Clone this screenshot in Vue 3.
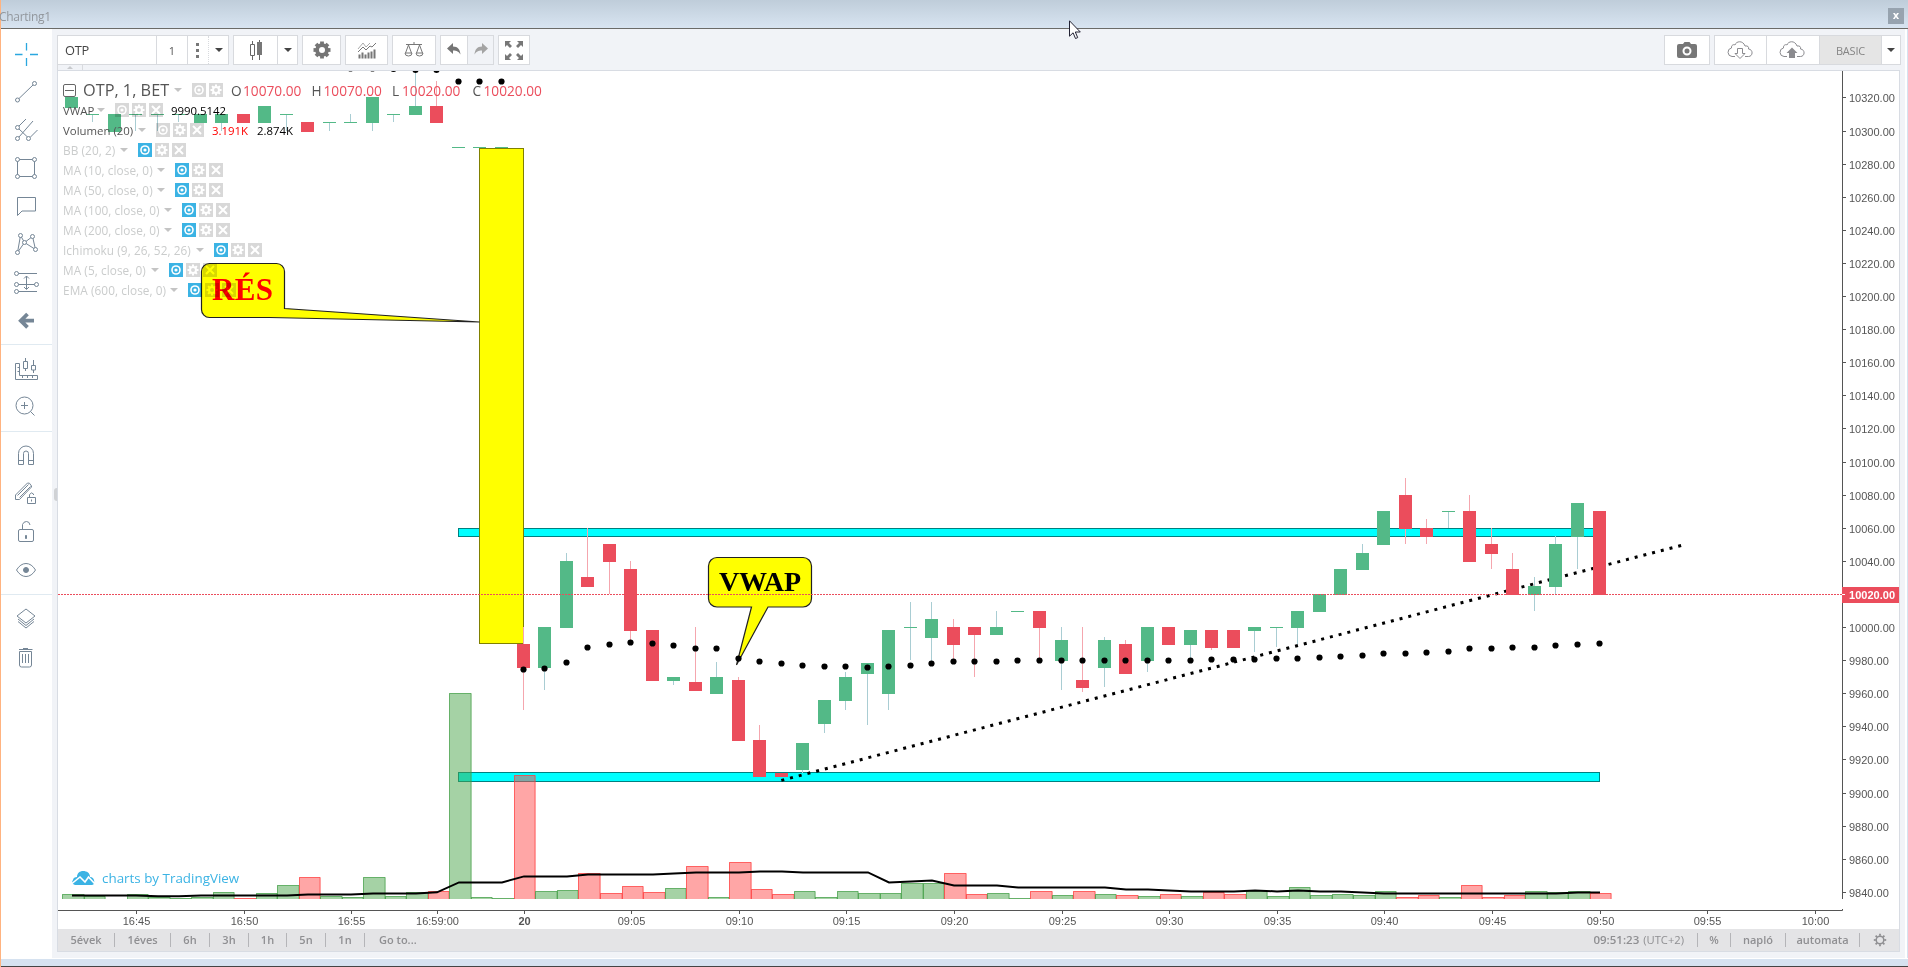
<template>
  <div class="window">
    <header class="titlebar">
      <span class="caption">Charting1</span>
      <button class="close">x</button>
    </header>

    <div class="body">
      <aside class="tools">
        <div v-for="(group, g) in toolGroups" :key="g" class="tool-group">
          <button v-for="tool in group" :key="tool.name" class="tool" :class="{ active: tool.active }">
            <svg width="38" height="38" viewBox="0 0 38 38">
              <path v-if="tool.d" :d="tool.d" />
              <path v-if="tool.bold" class="bold" :d="tool.bold" />
              <path v-if="tool.fill" class="fill" :d="tool.fill" />
              <circle v-for="(c, i) in tool.dots || []" :key="i" class="knot" :cx="c[0]" :cy="c[1]" r="2" />
            </svg>
          </button>
        </div>
      </aside>

      <div class="gutter"><i class="handle"></i></div>

      <main class="main">
        <div class="toolbar">
          <div class="group">
            <span class="symbol">OTP</span>
            <span class="interval">1</span>
            <span class="more"><svg width="20" height="28"><path d="M8 7h3v3H8zM8 13h3v3H8zM8 19h3v3H8z" fill="#777" /></svg></span>
            <span class="drop w20"><i class="caret"></i></span>
          </div>
          <div class="group">
            <span class="w43">
              <svg width="42" height="28" viewBox="0 0 42 28">
                <path d="M17.500 5v3M17.500 20v4M15.500 8.500h4v11h-4z" fill="none" stroke="#666" />
                <path d="M24.500 4v20" stroke="#666" /><path d="M22 6h5v13h-5z" fill="#777" />
              </svg>
            </span>
            <span class="drop w20"><i class="caret"></i></span>
          </div>
          <div class="group">
            <span class="w37">
              <svg width="18" height="18" viewBox="-9 -9 18 18">
                <circle r="4.900" fill="none" stroke="#757575" stroke-width="3.800" />
                <path v-for="a in 8" :key="a" d="M-1.900 -8.500h3.800v3h-3.800z" fill="#757575" :transform="`rotate(${a * 45})`" />
              </svg>
            </span>
          </div>
          <div class="group">
            <span class="w41">
              <svg width="20" height="18" viewBox="0 0 20 18">
                <path d="M2.500 17.500v-4M5.500 17.500v-6M8.500 17.500v-4M11.500 17.500v-6M14.500 17.500v-7M17.500 17.500v-9" stroke="#777" stroke-width="2" />
                <path d="M1 11l5-5 3 3 4-4 2 1 4-4" fill="none" stroke="#777" /><path d="M1 8l5-6 3 4 4-4" fill="none" stroke="#aaa" />
              </svg>
            </span>
          </div>
          <div class="group">
            <span class="w42">
              <svg width="20" height="18" viewBox="0 0 20 18" fill="none" stroke="#777">
                <path d="M2 3.500h16M10 1v3M4.500 4L1.500 12M4.500 4l3 8M15.500 4l-3 8M15.500 4l3 8" />
                <path d="M1 12a3.500 3 0 0 0 7 0zM12 12a3.500 3 0 0 0 7 0z" />
              </svg>
            </span>
          </div>
          <div class="group">
            <span class="w26"><svg width="16" height="14" viewBox="0 0 16 14"><path d="M1 5.500L7 0v3.500c5 0 7 3 7.500 8C12.500 8.500 11 7.500 7 7.500V11z" fill="#757575" /></svg></span>
            <span class="w26 muted"><svg width="16" height="14" viewBox="0 0 16 14"><path d="M15 5.500L9 0v3.500c-5 0-7 3-7.500 8C3.500 8.500 5 7.500 9 7.500V11z" fill="#a4a4a4" /></svg></span>
          </div>
          <div class="group last">
            <span class="w30">
              <svg width="18" height="19" viewBox="0 0 18 19">
                <path d="M0 0h6L4 2l3 3-2 2-3-3-2 2zM18 0h-6l2 2-3 3 2 2 3-3 2 2zM0 19h6l-2-2 3-3-2-2-3 3-2-2zM18 19h-6l2-2-3-3 2-2 3 3 2-2z" fill="#777" />
              </svg>
            </span>
          </div>

          <div class="group camera">
            <span class="w44">
              <svg width="20" height="16" viewBox="0 0 20 16">
                <path d="M2 2h4l1.500-2h5L14 2h4a2 2 0 0 1 2 2v10a2 2 0 0 1-2 2H2a2 2 0 0 1-2-2V4a2 2 0 0 1 2-2z" fill="#777" />
                <circle cx="10" cy="9" r="3.500" fill="#777" stroke="#fff" stroke-width="2" />
              </svg>
            </span>
          </div>
          <div class="group account">
            <span class="w51">
              <svg width="26" height="18" viewBox="0 0 26 18">
                <path d="M8 15.500H5a4.300 4.300 0 0 1-.5-8.500C4 4 7 3 8 4c1-4 8-5 10 1 3-.5 4 1 3.500 3 5 .5 4.500 7.500 0 7.500H18" fill="none" stroke="#8b8b8f" />
                <path d="M10.500 7.500h5v5h2.500l-5 5-5-5h2.500z" fill="#fff" stroke="#8b8b8f" />
              </svg>
            </span>
            <span class="w53">
              <svg width="26" height="18" viewBox="0 0 26 18">
                <path d="M8 15.500H5a4.300 4.300 0 0 1-.5-8.500C4 4 7 3 8 4c1-4 8-5 10 1 3-.5 4 1 3.500 3 5 .5 4.500 7.500 0 7.500H18" fill="none" stroke="#8b8b8f" />
                <path d="M10 17v-5H7.500L13 6.500l5.500 5.500H16v5z" fill="#8b8b8f" />
              </svg>
            </span>
            <span class="basic">BASIC</span>
            <span class="drop w19"><i class="caret"></i></span>
          </div>
        </div>
        <div class="tab"><i></i></div>

        <section class="pane">
          <svg class="chart" width="1841" height="858" viewBox="58 71 1841 858">
            <!-- price zones -->
            <g class="zone">
              <rect x="458.500" y="528.500" width="1141" height="8" />
              <rect x="458.500" y="772.500" width="1141" height="9" />
            </g>
            <rect class="gap" x="479.500" y="148.500" width="44" height="495" />
            <path class="note" d="M209.500 263.500h67a8 8 0 0 1 8 8v37l195 13.500-210-4.500h-60a8 8 0 0 1-8-8v-38a8 8 0 0 1 8-8z" />
            <text class="note-text res" x="212" y="300" textLength="61">RÉS</text>
            <path class="note" d="M717 557.500h86a8.500 8.500 0 0 1 8.500 8.500v32.500a8.500 8.500 0 0 1-8.500 8.500h-35l-31.500 58L751.500 607H717a8.500 8.500 0 0 1-8.500-8.500V566a8.500 8.500 0 0 1 8.500-8.500z" />
            <text class="note-text" x="719" y="591" textLength="82">VWAP</text>
            <path class="trend" d="M781.300 780.400L1682 545.200" />

            <!-- volume -->
            <g v-for="b in volumes" :key="'v' + b.i" :class="b.up ? 'vol-up' : 'vol-down'">
              <rect :x="b.x" :y="b.y" :width="b.w" :height="899 - b.y" />
              <path :d="`M${b.x + 0.5} 899V${b.y + 0.5}H${b.x + b.w - 0.5}V899`" />
            </g>
            <polyline class="vol-ma" :points="volumeMa" />

            <!-- candles -->
            <g v-for="c in candles" :key="'c' + c.i" :class="c.up ? 'up' : 'down'">
              <rect class="wick" :x="c.x" :y="c.high" width="1" :height="c.low - c.high" />
              <rect class="bar" :x="c.x - 6" :y="c.top" width="13" :height="c.height" />
            </g>
            <circle v-for="d in vwapDots" :key="'d' + d.x" :cx="d.x" :cy="d.y" r="3.100" />
            <path class="last-price" d="M58 594.500H1842" />

            <!-- axes -->
            <path class="axis" d="M1842.500 71V899M58 910.500H1842.500V909" />
            <g v-for="p in priceTicks" :key="p.label">
              <path class="axis" :d="`M1843 ${p.y}h3`" />
              <text class="tick" x="1849" :y="p.y + 4">{{ p.label }}</text>
            </g>
            <rect x="1842" y="587" width="57" height="16" fill="#eb4d5c" />
            <path d="M1842 594.500h3" stroke="#fff" />
            <text class="tick current" x="1849" y="599" textLength="46">10020.00</text>
            <g v-for="t in timeTicks" :key="t.label">
              <path class="axis" :d="`M${t.x} 911v3`" />
              <text class="tick" :class="{ day: t.label === '20' }" :x="t.x" y="925" text-anchor="middle">{{ t.label }}</text>
            </g>
          </svg>

          <div class="brand">
            <svg width="23" height="15" viewBox="0 0 23 15">
              <path d="M3 14a3 3 0 0 1-2-5C1 7 3 6 5 6c0-4 3-6 6-6 4 0 7 2 7 6 3 0 5 3 4 6 0 1-1 2-2 2z" fill="#3bb3e4" />
              <path d="M0 12.500l8-6.500 5 5 3.500-5 6.500 7" fill="none" stroke="#fff" stroke-width="1.600" />
            </svg>
            <span>charts by TradingView</span>
          </div>

          <div class="legend">
            <div class="row title">
              <i class="minus"></i>
              <div class="head">OTP, 1, BET<i class="arrow"></i></div>
              <LegendButton kind="eye" /><LegendButton kind="gear" />
              <span v-for="o in ohlc" :key="o.k" class="ohlc"><b :style="{ width: o.w + 'px' }">{{ o.k }}</b><em>{{ o.v }}</em></span>
            </div>
            <div v-for="s in studies" :key="s.name" class="row" :class="{ off: s.off }">
              <div class="head" :style="{ width: s.w + 'px' }"><span>{{ s.name }}</span><i class="arrow"></i></div>
              <LegendButton kind="eye" :on="s.off" /><LegendButton kind="gear" /><LegendButton kind="cross" />
              <span v-for="v in s.values || []" :key="v.t" class="value" :class="v.c">{{ v.t }}</span>
            </div>
          </div>
        </section>

        <footer class="footer">
          <span v-for="r in ranges" :key="r.t" class="range" :style="{ width: r.w + 'px' }">{{ r.t }}</span>
          <span class="goto">Go to...</span>
          <span class="clock">09:51:23 <small>(UTC+2)</small></span>
          <span class="opt w33">%</span>
          <span class="opt w55">napló</span>
          <span class="opt w74">automata</span>
          <span class="opt w40">
            <svg width="14" height="14" viewBox="-7 -7 14 14">
              <circle r="3.800" fill="none" stroke="#8f8f92" stroke-width="1.500" />
              <path v-for="a in 8" :key="a" d="M0 -6.200v2" stroke="#8f8f92" stroke-width="1.800" :transform="`rotate(${a * 45})`" />
            </svg>
          </span>
        </footer>
      </main>
      <div class="edge"></div>
    </div>
    <div class="status"></div>

    <svg class="cursor" width="13" height="20" viewBox="0 0 13 20">
      <path d="M.5.8v15.400l3.600-3.400 2.400 5.700 2.200-.9-2.400-5.600h5z" fill="#fff" stroke="#223" />
    </svg>
  </div>
</template>

<script setup>
import { h } from 'vue'

const X0 = 523.02
const STEP = 21.52
const barX = i => Math.floor(X0 + i * STEP)
const priceY = p => Math.floor(627.55 - (p - 10000) * 1.655)

// small square buttons next to each study name
const LegendButton = (props) => {
  const bg = props.on ? '#3bb3e4' : '#d8d8d8'
  const parts = {
    eye: [
      h('circle', { cx: 7, cy: 7, r: 4.8, fill: '#fff' }),
      h('circle', { cx: 7, cy: 7, r: 2.4, fill: '#fff', stroke: bg, 'stroke-width': 1.6 }),
    ],
    gear: [
      h('circle', { cx: 7, cy: 7, r: 3, fill: 'none', stroke: '#fff', 'stroke-width': 2 }),
      h('path', { d: 'M7 1.500v2M7 10.500v2M1.500 7h2M10.500 7h2M3.100 3.100l1.400 1.400M9.500 9.500l1.400 1.400M3.100 10.900l1.400-1.400M9.500 4.500l1.400-1.400', stroke: '#fff', 'stroke-width': 2 }),
    ],
    cross: [h('path', { d: 'M3 3l8 8M11 3l-8 8', stroke: '#fff', 'stroke-width': 2 })],
  }
  return h('svg', { class: 'legend-btn', width: 14, height: 14, viewBox: '0 0 14 14' }, [
    h('path', { d: 'M0 0h14v14H0z', fill: bg }),
    ...parts[props.kind],
  ])
}
LegendButton.props = { kind: String, on: Boolean }

// [open, high, low, close], first bar sits 21 bars before 09:00
const FIRST = -21
const raw = [
  [10314, 10320, 10314, 10320], [10310, 10310, 10305, 10310], [10300, 10310, 10300, 10310],
  [10310, 10310, 10300, 10310], [10310, 10310, 10300, 10310], [10310, 10310, 10305, 10310],
  [10305, 10310, 10305, 10310], [10305, 10310, 10300, 10310], [10310, 10310, 10305, 10305],
  [10305, 10315, 10305, 10315], [10310, 10310, 10300, 10310], [10305, 10305, 10300, 10300],
  [10305, 10305, 10300, 10305], [10305, 10310, 10305, 10305], [10305, 10320, 10300, 10320],
  [10310, 10310, 10305, 10310], [10310, 10335, 10310, 10315], [10315, 10330, 10305, 10305],
  [10290, 10290, 10290, 10290], [10290, 10290, 10290, 10290], [10290, 10290, 10290, 10290],
  [9990, 10000, 9950, 9976], [9976, 10000, 9962, 10000], [10000, 10045, 10000, 10040],
  [10030, 10060, 10025, 10025], [10050, 10050, 10020, 10040], [10035, 10040, 9992, 9998],
  [9998, 9998, 9968, 9968], [9968, 9970, 9965, 9970], [9967, 10000, 9962, 9962],
  [9960, 9979, 9960, 9970], [9968, 9970, 9932, 9932], [9932, 9941, 9910, 9910],
  [9912, 9912, 9910, 9910], [9914.5, 9930, 9912, 9930], [9942, 9956, 9936, 9956],
  [9956, 9973, 9950, 9970], [9972, 9978.5, 9941, 9978.5], [9960, 9998, 9950, 9998],
  [10000, 10015, 9980, 10000], [9994, 10015, 9979, 10005], [10000, 10005, 9980, 9990],
  [10000, 10000, 9970, 9996], [9996, 10010, 9996, 10000], [10010, 10010, 10010, 10010],
  [10010, 10010, 9980, 10000], [9980, 10000, 9962, 9992], [9968, 10000, 9960.5, 9964],
  [9976, 9994, 9964, 9992], [9990, 9992, 9972, 9972], [9980, 10000, 9973, 10000],
  [10000, 10000, 9990, 9990], [9990, 9998, 9980, 9998], [9998, 9998, 9986, 9988],
  [9998, 9998, 9988, 9988], [9998, 10000, 9985, 10000], [10000, 10000, 9988, 10000],
  [10000, 10010, 9990, 10010], [10010, 10020, 10010, 10020], [10020, 10035, 10020, 10035],
  [10035, 10050, 10035, 10045], [10050, 10070, 10050, 10070], [10080, 10090, 10050, 10060],
  [10060, 10065, 10050, 10055], [10070, 10070, 10060, 10070], [10070, 10080, 10040, 10040],
  [10050, 10060, 10035, 10045], [10035, 10045, 10020, 10020], [10020, 10030, 10010, 10025],
  [10025, 10055, 10020, 10050], [10055, 10075, 10035, 10075], [10070, 10070, 10020, 10020],
]

const candles = raw.map(([o, hi, lo, c], n) => {
  const i = FIRST + n
  const top = priceY(Math.max(o, c))
  return {
    i, top,
    x: barX(i),
    up: c >= o,
    high: priceY(hi),
    low: priceY(lo),
    height: priceY(Math.min(o, c)) - top + 1,
  }
})

// bar tops in pixels; negative = falling bar
const volumeTops = [
  894, 896, 899, 894, 897, 898, 897, 892, -898, 893, 885, -877, 896, 897, 877, 896, 892, -891,
  693, 897, 898, -775, 891, 890, -873, -893, -886, -892, 888, -866, 897, -862, -889, -894, 891,
  897, 891, 893, 893, 883, 883, -873, -894, 893, 898, -891, 895, -891, 894, -895, 896, -894, 896,
  -892, -894, 891, 896, 887, 895, 894, 895, 891, -897, -895, 897, -885, -897, -895, 891, 892, 891, -893,
]
const volumes = volumeTops.map((v, n) => {
  const i = FIRST + n
  const x = Math.floor(X0 + i * STEP - 8.6)
  return { i, x, w: Math.floor(X0 + (i + 1) * STEP - 8.6) - x + 0.5, y: Math.abs(v), up: v > 0 }
}).filter(b => b.y < 899)

const maY = [
  895.5, 895.5, 895.5, 895.5, 896.3, 896.3, 895.5, 895.5, 895.5, 895.5, 895.5, 894.5, 894.5, 894.5,
  893.5, 893.5, 893.5, 892.3, 882.4, 882.4, 882.4, 876.4, 876.4, 876.4, 874.4, 874.4, 874.4, 874.4,
  873.4, 872.4, 872.4, 872.4, 871.4, 871.4, 872.4, 872.4, 872.4, 872.4, 882.4, 881.5, 880.4, 885.4,
  885.4, 885.4, 887.4, 887.4, 887.4, 887.4, 887.4, 889.4, 889.4, 890.4, 891.4, 891.4, 891.4, 890.4,
  891.4, 890.4, 891.4, 891.4, 892.4, 893.4, 893.4, 893.4, 893.4, 893.4, 893.4, 893.4, 893.4, 893.4,
  892.4, 892.4,
]
const volumeMa = maY.map((y, n) => `${barX(FIRST + n) + 1},${y}`).join(' ')

const vwapY = [
  68.5, 68.5, 69, 70, 70, 81.5, 81.5, 81.5,
  669.5, 668.5, 662.5, 647.5, 644.5, 642.5, 643.5, 645.5, 648.5, 648.5, 658.5, 661.5, 663.5, 665.5,
  666.5, 666.5, 667.5, 666.5, 665.5, 663.5, 661.5, 661.5, 661.5, 660.5, 660.5, 660.5, 660.5, 660.5,
  660.5, 660.5, 660.5, 660.5, 659.5, 659.5, 659.5, 658.5, 658.5, 657.5, 656.5, 655.5, 653.5, 653.5,
  652.5, 651.5, 648.5, 648.5, 647.5, 647.5, 645.5, 644.5, 643.5,
]
const vwapDots = vwapY.map((y, n) => ({ x: barX(n - 8) + 0.5, y }))

const priceTicks = []
for (let p = 10320; p >= 9840; p -= 20) {
  if (p !== 10020) priceTicks.push({ label: p.toFixed(2), y: priceY(p) + 0.5 })
}

const timeTicks = [
  ['16:45', -18], ['16:50', -13], ['16:55', -8], ['16:59:00', -4], ['20', 0], ['09:05', 5], ['09:10', 10],
  ['09:15', 15], ['09:20', 20], ['09:25', 25], ['09:30', 30], ['09:35', 35], ['09:40', 40], ['09:45', 45],
  ['09:50', 50], ['09:55', 55], ['10:00', 60],
].map(([label, i]) => ({ label, x: barX(i) + 1.5 }))

const ohlc = [
  { k: 'O', v: '10070.00', w: 12 }, { k: 'H', v: '10070.00', w: 12 },
  { k: 'L', v: '10020.00', w: 10 }, { k: 'C', v: '10020.00', w: 11 },
]

// w is the distance from the name to the first button
const studies = [
  { name: 'VWAP', w: 52, values: [{ t: '9990.5142', c: 'black' }] },
  { name: 'Volumen (20)', w: 93, values: [{ t: '3.191K', c: 'red' }, { t: '2.874K', c: 'black' }] },
  { name: 'BB (20, 2)', w: 75, off: true },
  { name: 'MA (10, close, 0)', w: 112, off: true },
  { name: 'MA (50, close, 0)', w: 112, off: true },
  { name: 'MA (100, close, 0)', w: 119, off: true },
  { name: 'MA (200, close, 0)', w: 119, off: true },
  { name: 'Ichimoku (9, 26, 52, 26)', w: 151, off: true },
  { name: 'MA (5, close, 0)', w: 106, off: true },
  { name: 'EMA (600, close, 0)', w: 125, off: true },
]

const ranges = [
  { t: '5évek', w: 57 }, { t: '1éves', w: 56 }, { t: '6h', w: 39 }, { t: '3h', w: 39 },
  { t: '1h', w: 38 }, { t: '5n', w: 39 }, { t: '1n', w: 39 },
]

const toolGroups = [
  [
    { name: 'cross', active: true, d: 'M19.500 8v7.500M19.500 23v8M8 19.500h7.500M23 19.500h8' },
    { name: 'line', d: 'M12 25.500L26 12', dots: [[10.5, 27], [27.5, 10.5]] },
    { name: 'pitchfork', d: 'M12 15l7-7M12 26L26 10M23.500 26l7-7M12 18l8.500 8', dots: [[10.5, 16.5], [10.5, 27.5], [21.5, 27.5]] },
    { name: 'rect', d: 'M10.500 10.500h17v17h-17z', dots: [[10.5, 10.5], [27.5, 10.5], [10.5, 27.5], [27.5, 27.5]] },
    { name: 'text', d: 'M10.500 10.500h18v13.500H15l-4.500 4.500z' },
    { name: 'pattern', d: 'M10.500 27.500l3-17 4 7 8-6 3 13-11-7z', dots: [[10.5, 27.5], [13.5, 10.5], [17.5, 17.5], [25.5, 11.5], [28.5, 24.5]] },
    { name: 'forecast', d: 'M11 10.500h19M11 21.500h17M11 28.500h19M19.500 13v13M17 15.500l2.500-2.500 2.500 2.500M17 24l2.500 2.500 2.500-2.500', dots: [[9.5, 10.5], [9.5, 21.5], [29.5, 21.5], [9.5, 28.5]] },
    { name: 'back', bold: 'M20.500 13L13.800 19.700l6.700 6.700M14 19.700h13' },
  ],
  [
    { name: 'measure', d: 'M8.500 13.500h4v12h18v4h-22zM10.500 17.500h2M10.500 21.500h2M15.500 26v2M20.500 26v2M25.500 26v2M18.500 8v3.500M18.500 18.500V21M16.500 11.500h4v7h-4zM26.500 10v5M26.500 20v3M24.500 15.500h4v4.500h-4z' },
    { name: 'zoom', d: 'M26 17.500a8.500 8.500 0 1 1-17 0a8.500 8.500 0 1 1 17 0zM23.500 23.500l4 4M14 17.500h7M17.500 14v7' },
  ],
  [
    { name: 'magnet', d: 'M11.500 27.500V16.500a7.500 7.500 0 0 1 15 0v11h-5V16.500a2.500 2.500 0 0 0-5 0v11zM11.500 23.500h5M21.500 23.500h5' },
    { name: 'draw-lock', d: 'M8.500 24.500v-4.500L20.500 8q2-1 4 3v1L12.500 24.500zM10.500 20.500L21.500 9.500M12.500 22.500L23.500 11.500M20.500 22.500h8v6h-8zM22.500 22v-2.500q2-3 4-.5v1M24.500 24.500v2' },
    { name: 'lock', d: 'M13 16.500h12a1.500 1.500 0 0 1 1.500 1.500v9a1.500 1.500 0 0 1-1.500 1.500H13a1.500 1.500 0 0 1-1.500-1.500v-9a1.500 1.500 0 0 1 1.500-1.500zM15.500 16V11.500q1-3 4-3 3 0 3.500 3.500', fill: 'M18.500 22.500h1v3h-1z' },
    { name: 'hide', d: 'M9.500 19q4-6.500 9.500-6.500t9.500 6.500q-4 6.500-9.500 6.500t-9.500-6.500z', fill: 'M16.500 19a2.500 2.500 0 1 1 5 0a2.500 2.500 0 1 1-5 0z' },
  ],
  [
    { name: 'objects', d: 'M19 9l9 7-9 7-9-7zM11 19l8 6.500 8-6.500M11 21.500l8 6.500 8-6.500' },
    { name: 'remove', d: 'M12 11.500h13.500M16 10.500h5M12.500 13.500h12v13.500q0 2-2 2h-8q-2 0-2-2zM15.500 16v9M18.500 16v9M21.500 16v9' },
  ],
]
</script>

<style>
body {
  margin: 0;
  overflow: hidden;
}
.legend-btn {
  flex: none;
  mix-blend-mode: multiply;
}
</style>

<style scoped>
.window {
  position: relative;
  width: 1908px;
  height: 967px;
  box-sizing: border-box;
  display: flex;
  flex-direction: column;
  border-left: 1px solid #ffb380;
  background: #f1f3f7;
  font-family: 'Open Sans', 'Noto Sans', sans-serif;
  color: #555;
}
button {
  padding: 0;
  border: 0;
  background: none;
}
i, em, b {
  font-style: normal;
  font-weight: normal;
}
svg {
  display: block;
}

/* title bar */
.titlebar {
  height: 28px;
  flex: none;
  display: flex;
  justify-content: space-between;
  align-items: flex-start;
  padding-right: 4px;
  background: linear-gradient(#bfcdda, #d8e4f1);
  border-bottom: 1px solid #6b6b68;
}
.caption {
  margin: 7px 0 0 -2px;
  font-size: 12px;
  line-height: 20px;
  letter-spacing: -0.3px;
  color: #92979d;
}
.close {
  width: 16px;
  height: 16px;
  margin-top: 8px;
  background: #97a3af;
  color: #fff;
  font: bold 10px/14px 'DejaVu Sans', sans-serif;
}

.body {
  flex: 1;
  display: flex;
}
.tools {
  width: 51px;
  background: #fff;
}
.tool-group {
  padding: 5px 0 5px 6px;
  border-bottom: 1px solid #e0eaf1;
}
.tool-group:first-child {
  padding-top: 6px;
}
.tool-group:last-child {
  border: 0;
}
.tool {
  display: block;
  height: 38px;
}
.tool path {
  fill: none;
  stroke: #758696;
}
.tool .bold {
  stroke-width: 3.8;
}
.tool .fill {
  fill: #758696;
}
.tool .knot {
  fill: #fff;
  stroke: #758696;
}
.tool.active path {
  stroke: #2ba7df;
  stroke-width: 1.3;
}
.gutter {
  width: 5px;
  padding-top: 459px;
  box-sizing: border-box;
}
.handle {
  display: block;
  width: 3px;
  height: 13px;
  margin-left: 2px;
  border-radius: 4px 0 0 4px;
  background: #d0d2d5;
}

/* main column */
.main {
  width: 1848px;
  display: flex;
  flex-direction: column;
}
.toolbar {
  display: flex;
  padding-top: 6px;
  height: 30px;
  width: 1844px;
}
.group {
  display: flex;
  box-sizing: border-box;
  height: 30px;
  margin-right: 4px;
  border: 1px solid #d8dade;
  background: #fff;
  flex: none;
}
.group > span {
  display: flex;
  align-items: center;
  justify-content: center;
  box-sizing: border-box;
}
.group > span + span {
  border-left: 1px solid #d8dade;
}
.group .symbol {
  width: 98px;
  justify-content: flex-start;
  padding-left: 7px;
  font-size: 12.8px;
  letter-spacing: -0.2px;
  color: #444;
}
.group .interval {
  width: 31px;
  font-size: 11px;
}
.group .more {
  width: 21px;
}
.group > .more + .drop {
  border-left-style: dotted;
}
.w19 { width: 19px; }
.w20 { width: 20px; }
.w26 { width: 26px; }
.w30 { width: 30px; }
.w37 { width: 37px; }
.w41 { width: 41px; }
.w42 { width: 42px; }
.w43 { width: 43px; }
.w44 { width: 44px; }
.w51 { width: 51px; padding-right: 1px; }
.w53 { width: 53px; padding-right: 2px; }
.muted {
  background: #f1f3f7;
}
.caret {
  border: 4px solid transparent;
  border-top-color: #444;
  border-bottom: 0;
}
.camera {
  margin-left: auto;
}
.group.account {
  margin-right: 0;
}
.account .basic {
  width: 62px;
  background: #e5e5e5;
  font-size: 11px;
  letter-spacing: -0.2px;
  color: #858585;
}
.tab {
  width: 26px;
  height: 5px;
  border-left: 1px solid #d8dade;
  border-right: 1px solid #d8dade;
  box-sizing: border-box;
}
.tab i {
  display: block;
  width: 0;
  margin: 1px auto 0;
  border: 3px solid transparent;
  border-bottom-color: #c8cacd;
  border-top: 0;
}
.pane {
  position: relative;
  width: 1841px;
  height: 858px;
  border: 1px solid #d8dce3;
  border-bottom: 0;
  background: #fff;
}

/* chart drawing */
.zone rect {
  fill: #0ff;
  stroke: #008080;
}
.gap {
  fill: #ff0;
  stroke: #808000;
}
.note {
  fill: #ff0;
  stroke: #222;
  stroke-width: 1.2;
}
.note-text {
  font: bold 28px 'Liberation Serif', serif;
}
.note-text.res {
  font-size: 31px;
  fill: #f00;
}
.trend {
  stroke: #000;
  stroke-width: 3;
  stroke-dasharray: 3 6;
}
.up .wick { fill: #a9cdd3; }
.up .bar { fill: #53b987; }
.down .wick { fill: #f5a6ae; }
.down .bar { fill: #eb4d5c; }
.vol-up rect { fill: rgba(75, 166, 75, 0.5); }
.vol-up path { fill: none; stroke: rgba(60, 155, 65, 0.6); }
.vol-down rect { fill: rgba(255, 77, 77, 0.5); }
.vol-down path { fill: none; stroke: rgba(255, 60, 60, 0.65); }
.vol-ma {
  fill: none;
  stroke: #000;
  stroke-width: 2;
}
.last-price {
  stroke: #eb4d5c;
  stroke-dasharray: 2 1;
}
.axis {
  fill: none;
  stroke: #555;
}
.tick {
  font: 11px 'Liberation Sans', Arial, sans-serif;
  fill: #555;
}
.current {
  font-weight: bold;
  fill: #fff;
}
.day {
  font-weight: bold;
}

/* overlays */
.brand {
  position: absolute;
  left: 14px;
  top: 797px;
  display: flex;
  align-items: center;
  gap: 7px;
  font-size: 13.4px;
  line-height: 20px;
  color: #3bb3e4;
}
.legend {
  position: absolute;
  left: 5px;
  top: 9px;
}
.row {
  display: flex;
  align-items: center;
  gap: 3px;
  height: 20px;
  font-size: 11.4px;
  white-space: nowrap;
}
.head {
  display: flex;
  align-items: center;
  justify-content: space-between;
  margin-right: -3px;
  padding-right: 10px;
  box-sizing: border-box;
}
.arrow {
  border: 4px solid transparent;
  border-top-color: #c4c4c4;
  border-bottom: 0;
}
.row.off {
  color: #cacccc;
  font-size: 11.8px;
  letter-spacing: 0.07px;
}
.value {
  margin-left: 5px;
}
.value + .value {
  margin-left: 6px;
}
.black { color: #000; }
.red { color: #f00; }
.row.title .head {
  width: 109px;
  font-size: 16.3px;
}
.minus {
  position: relative;
  width: 11px;
  height: 11px;
  margin-right: 4px;
  border: 1px solid #666;
  border-radius: 2px;
}
.minus::after {
  content: '';
  position: absolute;
  left: 1px;
  right: 1px;
  top: 5px;
  height: 1px;
  background: #666;
}
.ohlc {
  display: flex;
  width: 77.5px;
  font-size: 13.7px;
}
.title svg + .ohlc {
  margin-left: 5px;
}
.ohlc em {
  color: #eb4d5c;
}

/* footer */
.footer {
  display: flex;
  align-items: center;
  width: 1841px;
  height: 22px;
  border: 1px solid #d8dce3;
  border-top: 0;
  background: #e4e4e6;
  color: #8f8f92;
  font-size: 11px;
  font-weight: 600;
}
.footer span {
  display: flex;
  justify-content: center;
  align-items: center;
  box-sizing: border-box;
  height: 14px;
  padding-bottom: 1px;
}
.range {
  border-right: 1px solid #b5b5b8;
}
.goto {
  margin-left: 14px;
}
.clock {
  margin-left: auto;
  padding-right: 13px;
  gap: 4px;
  font-size: 11.5px;
}
.clock small {
  font-size: 11.2px;
  font-weight: 400;
}
.opt {
  border-left: 1px solid #b5b5b8;
}
.w33 { width: 33px; }
.w55 { width: 55px; }
.w74 { width: 74px; }
.w40 { width: 40px; }

.edge {
  flex: 1;
  border-right: 1px solid #d6e2f0;
  box-shadow: inset -2px 0 #fff;
}
.status {
  height: 7px;
  flex: none;
  border-top: 1px solid #fff;
  border-bottom: 1px solid #444;
  background: #d6e2f0;
}
.cursor {
  position: absolute;
  left: 1068px;
  top: 20px;
}
</style>
